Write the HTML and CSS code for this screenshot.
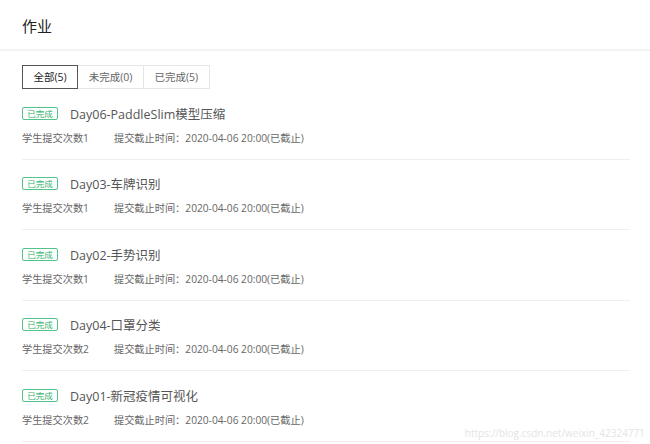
FILE: index.html
```html
<!DOCTYPE html>
<html lang="zh-CN">
<head>
    <meta charset="UTF-8">
    <meta name="viewport" content="width=device-width, initial-scale=1.0">
    <title>作业</title>
    <link rel="stylesheet" href="styles.css">
</head>
<body>
    <div class="work-page">
        <div class="work-head">
            <h2>作业</h2>
        </div>
        <div class="work-body">
            <ul class="work-tabs">
                <li class="active">全部(5)</li>
                <li>未完成(0)</li>
                <li>已完成(5)</li>
            </ul>
            <ul class="work-list">
                <li>
                    <div class="work-title"><span class="tag">已完成</span>Day06-PaddleSlim模型压缩</div>
                    <div class="work-meta"><span class="count">学生提交次数1</span><span>提交截止时间：2020-04-06 20:00(已截止)</span></div>
                </li>
                <li>
                    <div class="work-title"><span class="tag">已完成</span>Day03-车牌识别</div>
                    <div class="work-meta"><span class="count">学生提交次数1</span><span>提交截止时间：2020-04-06 20:00(已截止)</span></div>
                </li>
                <li>
                    <div class="work-title"><span class="tag">已完成</span>Day02-手势识别</div>
                    <div class="work-meta"><span class="count">学生提交次数1</span><span>提交截止时间：2020-04-06 20:00(已截止)</span></div>
                </li>
                <li>
                    <div class="work-title"><span class="tag">已完成</span>Day04-口罩分类</div>
                    <div class="work-meta"><span class="count">学生提交次数2</span><span>提交截止时间：2020-04-06 20:00(已截止)</span></div>
                </li>
                <li>
                    <div class="work-title"><span class="tag">已完成</span>Day01-新冠疫情可视化</div>
                    <div class="work-meta"><span class="count">学生提交次数2</span><span>提交截止时间：2020-04-06 20:00(已截止)</span></div>
                </li>
            </ul>
        </div>
        <div class="mark">https://blog.csdn.net/weixin_42324771</div>
    </div>
</body>
</html>
```

FILE: styles.css
```css
*{
    margin: 0;
    padding: 0;
    box-sizing: border-box;
}
body{
    font-family: "Open Sans", "Noto Sans CJK SC", sans-serif;
    color: #333;
    background: #fff;
}
ul{
    list-style: none;
}
.work-page{
    position: relative;
    height: 444px;
    overflow: hidden;
}
.work-head{
    height: 51px;
    padding-left: 22px;
    display: flex;
    align-items: center;
    border-bottom: 2px solid #f4f4f4;
}
.work-head h2{
    font-size: 15px;
    font-weight: normal;
    color: #222;
    line-height: 20px;
    margin-top: 2px;
}
.work-body{
    padding: 14px 20px 0 22px;
}
.work-tabs{
    display: flex;
    height: 24px;
}
.work-tabs li{
    font-size: 10.5px;
    line-height: 22px;
    padding: 0 10.5px;
    color: #666;
    border: 1px solid #e6e6e6;
    border-left: none;
}
.work-tabs li.active{
    color: #222;
    border: 1px solid #555;
}
.work-list li{
    padding: 14px 0 11.5px;
    border-bottom: 1px solid #efefef;
}
.work-title{
    display: flex;
    align-items: center;
    height: 20px;
    font-size: 12.5px;
    color: #555;
}
.work-title .tag{
    width: 36px;
    height: 13px;
    margin-right: 12px;
    border: 1px solid #52c48a;
    border-radius: 2px;
    color: #34b36c;
    font-size: 8.5px;
    line-height: 11px;
    text-align: center;
}
.work-meta{
    display: flex;
    height: 20px;
    margin-top: 4px;
    align-items: center;
    font-size: 10.2px;
    color: #666;
}
.work-meta .count{
    width: 92px;
}
.mark{
    position: absolute;
    right: 5px;
    bottom: 4px;
    font-size: 10px;
    color: #e4e4e4;
}
```
